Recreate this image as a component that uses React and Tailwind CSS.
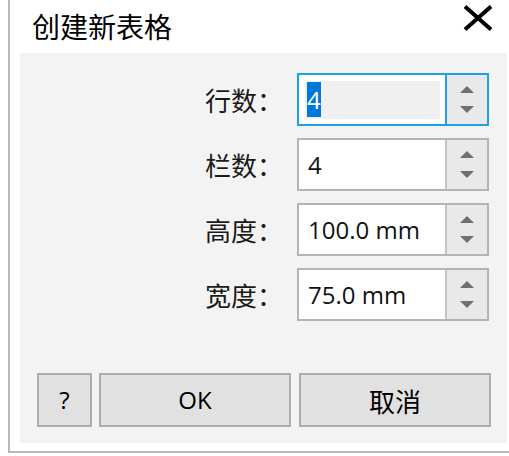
import { useState } from 'react';

const rows = [
  { label: '行数：', value: '4', focused: true },
  { label: '栏数：', value: '4' },
  { label: '高度：', value: '100.0 mm' },
  { label: '宽度：', value: '75.0 mm' },
];

function Spinner({ focused }) {
  return (
    <div
      className={`w-[42px] h-full flex flex-col items-center justify-center gap-[13px] bg-[#e9e9e9] border-l-2 ${
        focused ? 'border-[#1e9fe8]' : 'border-[#c4c4c4]'
      }`}
    >
      <svg width="14" height="7" viewBox="0 0 14 7">
        <path d="M7 0 L14 7 L0 7 Z" fill="#707070" />
      </svg>
      <svg width="14" height="7" viewBox="0 0 14 7">
        <path d="M0 0 L14 0 L7 7 Z" fill="#707070" />
      </svg>
    </div>
  );
}

function NumberField({ value, focused }) {
  return (
    <div
      className={`w-[192px] h-[53px] flex border-2 bg-white ${
        focused ? 'border-[#1e9fe8]' : 'border-[#b4b4b4]'
      }`}
    >
      <div className="flex-1 flex items-center pl-[6px] pr-[5px]">
        {focused ? (
          <div className="w-full h-[38px] bg-[#f0f0f0] flex items-center pl-[2px]">
            <span className="bg-[#0078d7] text-white leading-[35px]">{value}</span>
          </div>
        ) : (
          <span className="pl-[3px] text-[#111]">{value}</span>
        )}
      </div>
      <Spinner focused={focused} />
    </div>
  );
}

export default function App() {
  const [rowsState] = useState(rows);

  return (
    <div className="w-[509px] h-[456px] bg-white font-['Open_Sans','Noto_Sans_CJK_SC',sans-serif] text-[24px] text-black">
      <div className="ml-2 h-[453px] border-l-2 border-b-2 border-[#b9b9b9] flex flex-col">
        <div className="h-[53px] flex items-center justify-between pl-[22px] pr-[16px]">
          <span className="text-[28px] font-['Noto_Sans_CJK_SC',sans-serif] leading-none pb-[1px]">
            创建新表格
          </span>
          <svg width="30" height="26" viewBox="0 0 30 26" className="self-start mt-[5px]">
            <path d="M2 1.5 L28 24.5 M28 1.5 L2 24.5" stroke="#000" strokeWidth="4" />
          </svg>
        </div>
        <div className="ml-[10px] mr-[2px] h-[390px] bg-[#f3f3f3] flex flex-col pt-[20px] pb-[16px]">
          <div className="flex flex-col gap-[12px] pr-[18px]">
            {rowsState.map((r) => (
              <div key={r.label} className="flex items-center justify-end gap-[14px]">
                <span className="font-['Noto_Sans_CJK_SC',sans-serif] text-[26px] text-[#1a1a1a]">
                  {r.label}
                </span>
                <NumberField value={r.value} focused={r.focused} />
              </div>
            ))}
          </div>
          <div className="mt-auto flex pl-[17px]">
            <button className="w-[55px] h-[54px] bg-[#e1e1e1] border-2 border-[#adadad] text-[24px]">?</button>
            <button className="ml-[7px] w-[192px] h-[54px] bg-[#e1e1e1] border-2 border-[#adadad]">OK</button>
            <button className="ml-[8px] w-[192px] h-[54px] bg-[#e1e1e1] border-2 border-[#adadad] font-['Noto_Sans_CJK_SC',sans-serif] text-[26px]">
              取消
            </button>
          </div>
        </div>
      </div>
    </div>
  );
}
